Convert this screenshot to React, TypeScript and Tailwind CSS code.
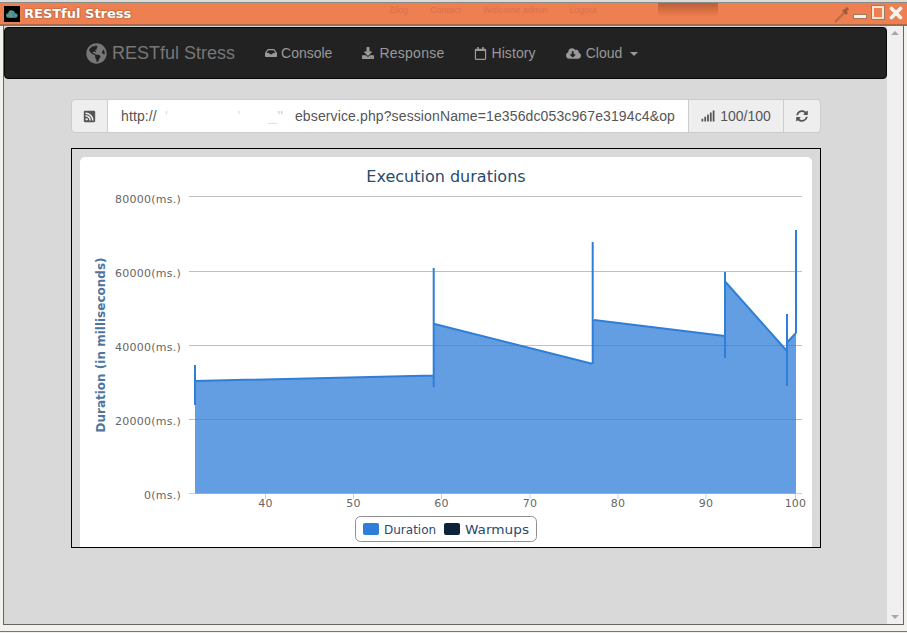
import React from "react";
import { FaGlobeAmericas, FaInbox, FaDownload, FaRegCalendar, FaCloudDownloadAlt, FaRssSquare, FaSignal, FaSyncAlt } from "react-icons/fa";

function NavLink({ icon, label, caret, extra }: { icon: React.ReactNode; label: string; caret?: boolean; extra: string }) {
  return (
    <div className={"flex items-center px-[15px] text-[14px] text-[#999] " + extra}>
      {icon}
      <span>{label}</span>
      {caret && <span className="ml-[3px] mt-[1px] w-0 h-0 border-x-4 border-x-transparent border-t-4 border-t-[#999]" />}
    </div>
  );
}

function Chart() {
  const grid = [196.5, 271.5, 345.5, 419.5];
  const yLabels = [["80000(ms.)", 203], ["60000(ms.)", 277], ["40000(ms.)", 351], ["20000(ms.)", 425], ["0(ms.)", 499]] as const;
  const xTicks = [[40, 265.5], [50, 353.5], [60, 441.5], [70, 530], [80, 618], [90, 706], [100, 795.5]] as const;
  const line = "M195 365V405M195 381L433.5 375.5M433.7 268V387M434.5 324L592 363.7M592.7 242V364M594 320L725 336M725 272V358M725.5 282L786.5 350.5M787 314V386M787.5 342L796 333M796 333V230";
  const area = "M195 493.5V381L433.5 375.5V324L592.7 363.7V320L725 336V282L787 351V342L796 333V493.5Z";
  return (
    <svg viewBox="80 157 732 390" width={732} height={390} className="block" style={{ fontFamily: '"DejaVu Sans", sans-serif' }}>
      <text x={446} y={182} textAnchor="middle" fontSize={16} fill="#274b6d">Execution durations</text>
      {grid.map((y) => <line key={y} x1={189} x2={802} y1={y} y2={y} stroke="#c0c0c0" />)}
      <line x1={189} x2={802} y1={493.5} y2={493.5} stroke="#c0d0e0" />
      {xTicks.map(([l, x]) => <line key={l} x1={x} x2={x} y1={493.5} y2={499} stroke="#c0d0e0" />)}
      <path d={area} fill="#2f7ed8" fillOpacity={0.75} />
      <path d={line} fill="none" stroke="#2f7ed8" strokeWidth={2} />
      {yLabels.map(([t, y]) => <text key={t} x={181} y={y} textAnchor="end" fontSize={11} letterSpacing={0.25} fill="#666">{t}</text>)}
      {xTicks.map(([l, x]) => <text key={l} x={x} y={507} textAnchor="middle" fontSize={11} letterSpacing={0.25} fill="#666">{l}</text>)}
      <text transform="translate(105 345) rotate(-90)" textAnchor="middle" fontSize={12} fontWeight="bold" fill="#4d759e">Duration (in milliseconds)</text>
      <rect x={355.5} y={516.5} width={181} height={25} rx={5} fill="#fff" stroke="#909090" />
      <rect x={363} y={523} width={16} height={12} rx={2} fill="#2f7ed8" />
      <text x={384} y={534} fontSize={12} fill="#274b6d">Duration</text>
      <rect x={444} y={523} width={16} height={12} rx={2} fill="#0d233a" />
      <text x={465} y={534} fontSize={12} textLength={64} lengthAdjust="spacingAndGlyphs" fill="#274b6d">Warmups</text>
    </svg>
  );
}

export default function App() {
  return (
    <div className="relative w-[907px] h-[633px] overflow-hidden flex flex-col bg-[#f2f1ed]" style={{ fontFamily: '"Liberation Sans", Arial, sans-serif' }}>
      <div className="h-[3px] bg-[#dcdbd7] border-b border-[#8a8a86] shrink-0" />
      <div className="relative h-[23px] shrink-0 flex items-center bg-[#ee7f51] border-b-2 border-[#a9684a] pl-[4px]">
        <div className="w-4 h-4 bg-black flex items-center justify-center shrink-0">
          <svg viewBox="0 0 16 16" width={14} height={12}>
            <path d="M3 13a3 3 0 0 1 0-6 4 4 0 0 1 3-4 5 5 0 0 1 6 4 3 3 0 0 1 1 6z" fill="#4a9a8a" />
            <rect x={6} y={8} width={2} height={5} fill="#d9703a" />
            <rect x={9} y={6} width={2} height={7} fill="#3a7ad9" />
          </svg>
        </div>
        <span className="ml-[4px] text-[13px] font-bold text-white" style={{ fontFamily: '"DejaVu Sans", sans-serif', textShadow: "0 0 2px #7a4a30" }}>RESTful Stress</span>
        <div className="absolute left-[390px] top-[1px] flex gap-[22px] text-[9px] text-[#d8714a]">
          <span>Blog</span><span>Contact</span><span>Welcome admin</span><span>Logout</span>
        </div>
        <div className="absolute left-[658px] top-0 w-[60px] h-[14px] bg-gradient-to-b from-[#bd5f38] to-[#ee7f51]" />
        <svg viewBox="0 0 20 20" width={20} height={20} className="absolute left-[832px] top-[2px]">
          <path d="M3 17L12 8" stroke="#b56a48" strokeWidth={2} />
          <path d="M11 5L15 9M13 6L16 3" stroke="#a05a3c" strokeWidth={3} />
        </svg>
        <div className="absolute right-[4px] top-[3px] flex items-end gap-[5px]">
          <div className="w-[14px] h-[5px] mb-[1px] bg-[#f4f0ec] border border-[#a8765c]" />
          <div className="w-[12px] h-[13px] border-2 border-[#efe3da] outline outline-1 outline-[#a8765c] mb-[1px]" />
          <svg viewBox="0 0 14 14" width={14} height={14}>
            <path d="M2.5 2.5L11.5 11.5M11.5 2.5L2.5 11.5" stroke="#f7f3ef" strokeWidth={3.6} strokeLinecap="round" />
          </svg>
        </div>
      </div>
      <div className="flex-1 min-h-0 flex pl-[3px] pr-[3px]">
        <div className="flex-1 min-w-0 flex border-x border-[#66665f] border-b">
          <div className="flex-1 min-w-0 bg-[#d9d9d9] pt-[1px]">
            <div className="h-[52px] bg-[#222] border border-[#080808] rounded-[4px] flex items-center pl-[81px]">
              <div className="flex items-center gap-[5px] text-[18px] text-[#777] pr-[15px]">
                <FaGlobeAmericas size={21} />
                <span>RESTful Stress</span>
              </div>
              <NavLink extra="gap-[4px]" icon={<FaInbox size={12} />} label="Console" />
              <NavLink extra="gap-[5px] tracking-[0.25px]" icon={<FaDownload size={12} />} label="Response" />
              <NavLink extra="gap-[4px] tracking-[0.1px]" icon={<FaRegCalendar size={13} />} label="History" />
              <NavLink extra="gap-[5px]" icon={<FaCloudDownloadAlt size={15} />} label="Cloud" caret />
            </div>
            <div className="mt-[20px] ml-[67px] w-[750px] h-[34px] flex text-[14px] text-[#555]">
              <div className="w-[37px] shrink-0 flex items-center justify-center bg-[#eee] border border-[#ccc] rounded-l-[4px]">
                <FaRssSquare size={13} />
              </div>
              <div className="w-[580px] shrink-0 bg-white border-y border-[#ccc] flex items-center pl-[13px] overflow-hidden whitespace-nowrap tracking-[0.12px]">
                <span>http://</span>
                <span className="ml-[8px] text-[#ddd]">'</span>
                <span className="ml-[70px] text-[#ddd]">'</span>
                <span className="ml-[28px] text-[#ddd]">_</span>
                <span className="ml-[1px] text-[#ccc]">''</span>
                <span className="ml-[12px]">ebservice.php?sessionName=1e356dc053c967e3194c4&amp;op</span>
              </div>
              <div className="w-[96px] shrink-0 flex items-center justify-center gap-[5px] bg-[#eee] border border-[#ccc]">
                <FaSignal size={14} />
                <span>100/100</span>
              </div>
              <div className="flex-1 flex items-center justify-center bg-[#eee] border-y border-r border-[#ccc] rounded-r-[4px]">
                <FaSyncAlt size={12} />
              </div>
            </div>
            <div className="mt-[15px] ml-[67px] w-[750px] h-[400px] border border-black px-[8px] pt-[8px]">
              <div className="bg-white rounded-t-[5px] h-[390px]">
                <Chart />
              </div>
            </div>
          </div>
          <div className="w-[16px] shrink-0 bg-[#f0f0f0] flex flex-col items-center justify-between py-[5px]">
            <span className="w-0 h-0 border-x-[4px] border-x-transparent border-b-[4px] border-b-[#a8a8a8]" />
            <span className="w-0 h-0 border-x-[4px] border-x-transparent border-t-[4px] border-t-[#a8a8a8]" />
          </div>
        </div>
      </div>
      <div className="h-[7px] shrink-0 border-b border-[#77776f] mb-[1px]" />
    </div>
  );
}
